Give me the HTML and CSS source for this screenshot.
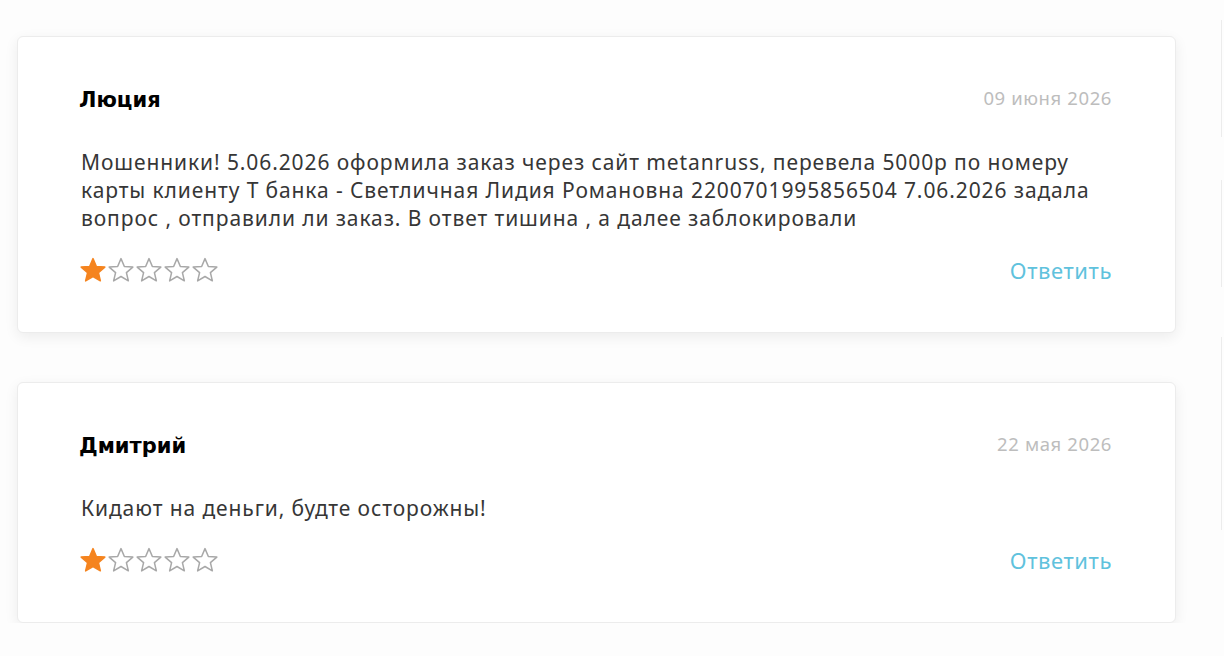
FILE: index.html
```html
<!DOCTYPE html>
<html lang="ru">
<head>
  <meta charset="UTF-8"/>
  <meta name="viewport" content="width=device-width,initial-scale=1"/>
  <title>Отзывы</title>
  <link rel="stylesheet" href="styles.css">
</head>
<body>
  <div class="page">
    <!-- Review list -->
    <main class="reviews">

      <!-- Review 1 -->
      <article class="review">
        <div class="review-head">
          <span class="review-name">Люция</span>
          <span class="review-date">09 июня 2026</span>
        </div>
        <p class="review-text">Мошенники! 5.06.2026 оформила заказ через сайт metanruss, перевела 5000р по номеру карты клиенту Т банка - Светличная Лидия Романовна 2200701995856504 7.06.2026 задала вопрос , отправили ли заказ. В ответ тишина , а далее заблокировали</p>
        <div class="review-foot">
          <div class="stars">
            <svg class="star on" viewBox="0 0 24 24"><path d="M12 1.5l3.1 7.2 7.8.6-5.9 5.1 1.8 7.6L12 18l-6.8 4 1.8-7.6-5.9-5.1 7.8-.6z"/></svg>
            <svg class="star" viewBox="0 0 24 24"><path d="M12 1.5l3.1 7.2 7.8.6-5.9 5.1 1.8 7.6L12 18l-6.8 4 1.8-7.6-5.9-5.1 7.8-.6z"/></svg>
            <svg class="star" viewBox="0 0 24 24"><path d="M12 1.5l3.1 7.2 7.8.6-5.9 5.1 1.8 7.6L12 18l-6.8 4 1.8-7.6-5.9-5.1 7.8-.6z"/></svg>
            <svg class="star" viewBox="0 0 24 24"><path d="M12 1.5l3.1 7.2 7.8.6-5.9 5.1 1.8 7.6L12 18l-6.8 4 1.8-7.6-5.9-5.1 7.8-.6z"/></svg>
            <svg class="star" viewBox="0 0 24 24"><path d="M12 1.5l3.1 7.2 7.8.6-5.9 5.1 1.8 7.6L12 18l-6.8 4 1.8-7.6-5.9-5.1 7.8-.6z"/></svg>
          </div>
          <a class="reply" href="#">Ответить</a>
        </div>
      </article>

      <!-- Review 2 -->
      <article class="review">
        <div class="review-head">
          <span class="review-name">Дмитрий</span>
          <span class="review-date">22 мая 2026</span>
        </div>
        <p class="review-text">Кидают на деньги, будте осторожны!</p>
        <div class="review-foot">
          <div class="stars">
            <svg class="star on" viewBox="0 0 24 24"><path d="M12 1.5l3.1 7.2 7.8.6-5.9 5.1 1.8 7.6L12 18l-6.8 4 1.8-7.6-5.9-5.1 7.8-.6z"/></svg>
            <svg class="star" viewBox="0 0 24 24"><path d="M12 1.5l3.1 7.2 7.8.6-5.9 5.1 1.8 7.6L12 18l-6.8 4 1.8-7.6-5.9-5.1 7.8-.6z"/></svg>
            <svg class="star" viewBox="0 0 24 24"><path d="M12 1.5l3.1 7.2 7.8.6-5.9 5.1 1.8 7.6L12 18l-6.8 4 1.8-7.6-5.9-5.1 7.8-.6z"/></svg>
            <svg class="star" viewBox="0 0 24 24"><path d="M12 1.5l3.1 7.2 7.8.6-5.9 5.1 1.8 7.6L12 18l-6.8 4 1.8-7.6-5.9-5.1 7.8-.6z"/></svg>
            <svg class="star" viewBox="0 0 24 24"><path d="M12 1.5l3.1 7.2 7.8.6-5.9 5.1 1.8 7.6L12 18l-6.8 4 1.8-7.6-5.9-5.1 7.8-.6z"/></svg>
          </div>
          <a class="reply" href="#">Ответить</a>
        </div>
      </article>

    </main>

    <!-- Edge of the next column, cut off by the window -->
    <aside class="side">
      <div class="side-block b1"></div>
      <div class="side-block b2"></div>
      <div class="side-block b3"></div>
    </aside>
  </div>
</body>
</html>
```

FILE: styles.css
```css
/*  BASE  */
* { box-sizing: border-box; margin: 0; padding: 0; }
body { background: #fdfdfd; font-family: "Noto Sans", "Open Sans", sans-serif; color: #333; overflow: hidden; }

/*  PAGE LAYOUT  */
.page { display: flex; padding: 36px 0 0 17px; gap: 45px; }
.reviews { width: 1159px; flex-shrink: 0; display: flex; flex-direction: column; gap: 49px; }

/*  REVIEW CARD  */
.review { background: #fff; border: 1px solid #ececec; border-radius: 6px; box-shadow: 0 4px 14px rgba(0,0,0,0.07); padding: 49px 63px 48px; }
.review-head { display: flex; justify-content: space-between; align-items: center; height: 28px; }
.review-name { font-family: "DejaVu Sans", sans-serif; font-weight: bold; font-size: 21px; color: #000; margin-left: -2px; }
.review-date { font-size: 18.5px; letter-spacing: 0.6px; color: #bdbdbd; margin-top: -6px; }
.review-text { margin-top: 34px; font-size: 21px; letter-spacing: 0.9px; line-height: 28px; color: #363636; }

/*  FOOTER: STARS + REPLY  */
.review-foot { display: flex; justify-content: space-between; align-items: center; margin-top: 24px; height: 28px; }
.stars { display: flex; gap: 2px; margin-left: -1px; }
.star { width: 26px; height: 26px; fill: #fff; stroke: #a8a8a8; stroke-width: 1.4; stroke-linejoin: round; }
.star.on { fill: #f5841f; stroke: #f5841f; }
.reply { font-size: 22px; letter-spacing: 0.6px; color: #5fc2dd; text-decoration: none; }

/*  SIDE COLUMN EDGE  */
.side { width: 40px; flex-shrink: 0; margin-top: -16px; }
.side-block { border-left: 1px solid #ececec; }
.side-block.b1 { height: 117px; }
.side-block.b2 { height: 107px; margin-top: 43px; }
.side-block.b3 { height: 193px; margin-top: 50px; }
```
